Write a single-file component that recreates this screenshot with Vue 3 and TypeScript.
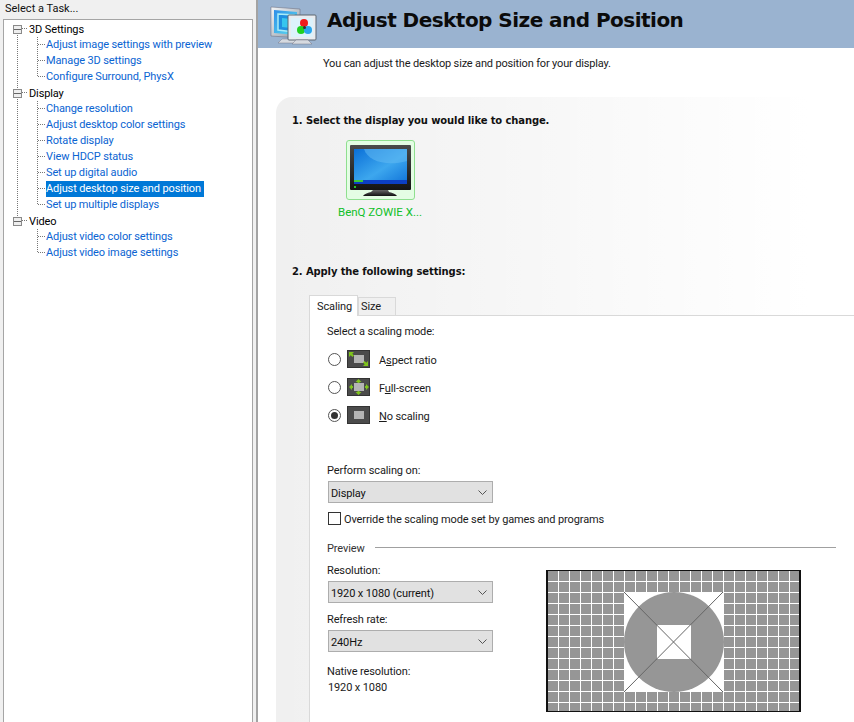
<script setup lang="ts">
type TreeGroup = { name: string; items: string[] };

const tree: TreeGroup[] = [
  {
    name: '3D Settings',
    items: ['Adjust image settings with preview', 'Manage 3D settings', 'Configure Surround, PhysX'],
  },
  {
    name: 'Display',
    items: [
      'Change resolution',
      'Adjust desktop color settings',
      'Rotate display',
      'View HDCP status',
      'Set up digital audio',
      'Adjust desktop size and position',
      'Set up multiple displays',
    ],
  },
  {
    name: 'Video',
    items: ['Adjust video color settings', 'Adjust video image settings'],
  },
];

const selected = 'Adjust desktop size and position';
</script>

<template>
  <div class="window">
    <aside class="sidebar">
      <div class="task-title">Select a Task...</div>
      <div class="tree">
        <svg class="tree-lines" width="60" height="240">
          <g stroke="#777" stroke-dasharray="1 1" fill="none">
            <path d="M17.5 12V196M22 7.5H28M22 71.5H28M22 199.5H28" />
            <path d="M37.5 16V55.5M37.5 80V183.5M37.5 208V231.5" />
            <path d="M38 23.5H46M38 39.5H46M38 55.5H46M38 87.5H46M38 103.5H46M38 119.5H46M38 135.5H46M38 151.5H46M38 167.5H46M38 183.5H46M38 215.5H46M38 231.5H46" />
          </g>
        </svg>
        <div v-for="group in tree" :key="group.name" class="group">
          <div class="group-row">
            <span class="expander"></span>
            <span>{{ group.name }}</span>
          </div>
          <div v-for="item in group.items" :key="item" class="item-row">
            <span class="item" :class="{ selected: item === selected }">{{ item }}</span>
          </div>
        </div>
      </div>
    </aside>

    <main class="content">
      <header class="banner">
        <svg class="banner-icon" width="48" height="46" viewBox="0 0 48 46">
          <defs>
            <linearGradient id="bz" x1="0" y1="0" x2="1" y2="1">
              <stop offset="0" stop-color="#f4f6f8" />
              <stop offset="1" stop-color="#8b96a3" />
            </linearGradient>
            <linearGradient id="sc" x1="0" y1="0" x2="1" y2="1">
              <stop offset="0" stop-color="#2f8fe8" />
              <stop offset="1" stop-color="#5fe0f0" />
            </linearGradient>
          </defs>
          <path d="M1 5L30 7V36L1 34z" fill="url(#bz)" stroke="#667" stroke-width="0.5" />
          <path d="M4 8L27 10V33L4 31z" fill="url(#sc)" />
          <path d="M8 12L24 13V30L8 28z" fill="#1f8fe0" stroke="#a8ecf8" stroke-width="1.5" />
          <path d="M12 16L21 17V26L12 25z" fill="#36c6ee" />
          <path d="M8 41h20l-2-4H12z" fill="#d6dae0" stroke="#667" stroke-width="0.4" />
          <rect x="18" y="13" width="28" height="25" rx="1" fill="#e8ecf0" stroke="#5d6670" stroke-width="1" />
          <rect x="21" y="16" width="22" height="19" fill="#dcf2fb" />
          <path d="M22 42h20l-4-4H26z" fill="#d6dae0" stroke="#667" stroke-width="0.4" />
          <circle cx="34" cy="21" r="4" fill="#f01c1c" />
          <circle cx="31" cy="28" r="4" fill="#20d020" />
          <circle cx="38" cy="28" r="4" fill="#2aa6ee" />
          <circle cx="34.5" cy="25.5" r="1.5" fill="#333" />
        </svg>
        <h1>Adjust Desktop Size and Position</h1>
      </header>

      <p class="intro">You can adjust the desktop size and position for your display.</p>

      <section class="panel">
        <h2 class="step-one">1. Select the display you would like to change.</h2>

        <div class="display-pick">
          <div class="display-card">
            <svg width="61" height="51" viewBox="0 0 61 51">
              <defs>
                <linearGradient id="scr" x1="0" y1="0" x2="1" y2="1">
                  <stop offset="0" stop-color="#0a6fd8" />
                  <stop offset="0.55" stop-color="#3da7ee" />
                  <stop offset="1" stop-color="#0f72d8" />
                </linearGradient>
                <linearGradient id="bez" x1="0" y1="0" x2="0" y2="1">
                  <stop offset="0" stop-color="#4a4a4a" />
                  <stop offset="1" stop-color="#141414" />
                </linearGradient>
                <linearGradient id="base" x1="0" y1="0" x2="0" y2="1">
                  <stop offset="0" stop-color="#666" />
                  <stop offset="1" stop-color="#111" />
                </linearGradient>
              </defs>
              <rect x="0" y="0" width="61" height="45" rx="1" fill="url(#bez)" />
              <rect x="4" y="4" width="53" height="35" fill="url(#scr)" />
              <path d="M14 4C18 16 36 22 57 16V4z" fill="#62baf2" opacity="0.55" />
              <rect x="4" y="35" width="53" height="4" fill="#0c3fc4" />
              <rect x="4" y="35" width="9" height="2" fill="#3cc83c" />
              <rect x="4" y="41" width="2" height="2" fill="#27c027" />
              <path d="M23 45h15l1 2c4 1 7 2 8 4H13c1-2 4-3 8-4z" fill="url(#base)" />
            </svg>
          </div>
          <div class="display-name">BenQ ZOWIE X...</div>
        </div>

        <h2 class="step-two">2. Apply the following settings:</h2>

        <div class="tabs">
          <div class="tab active">Scaling</div>
          <div class="tab">Size</div>
        </div>

        <div class="tab-body">
          <div class="label">Select a scaling mode:</div>

          <div class="modes">
            <label class="mode">
              <span class="radio"></span>
              <svg class="mode-icon" width="23" height="18" viewBox="0 0 23 18">
                <rect width="23" height="18" fill="#4b4b4b" />
                <rect x="0.5" y="0.5" width="22" height="17" fill="none" stroke="#333" />
                <rect x="7" y="5" width="10" height="8" fill="#b4b4b4" />
                <path d="M2 2h5l-1.7 1.7 1.7 1.7-1.6 1.6-1.7-1.7L2 7zM21 16h-5l1.7-1.7-1.7-1.7 1.6-1.6 1.7 1.7L21 11z" fill="#7fc41c" />
              </svg>
              <span class="mode-text">A<u>s</u>pect ratio</span>
            </label>
            <label class="mode">
              <span class="radio"></span>
              <svg class="mode-icon" width="23" height="18" viewBox="0 0 23 18">
                <rect width="23" height="18" fill="#4b4b4b" />
                <rect x="0.5" y="0.5" width="22" height="17" fill="none" stroke="#333" />
                <rect x="7" y="5" width="10" height="8" fill="#b4b4b4" />
                <path d="M11.5 1l3 3h-2v1h-2V4h-2zM11.5 17l3-3h-2v-1h-2v1h-2zM2 9l3-3v2h1v2H5v2zM22 9l-3-3v2h-1v2h1v2z" fill="#7fc41c" />
              </svg>
              <span class="mode-text">F<u>u</u>ll-screen</span>
            </label>
            <label class="mode">
              <span class="radio checked"></span>
              <svg class="mode-icon" width="23" height="18" viewBox="0 0 23 18">
                <rect width="23" height="18" fill="#4b4b4b" />
                <rect x="0.5" y="0.5" width="22" height="17" fill="none" stroke="#333" />
                <rect x="7" y="5" width="10" height="8" fill="#b4b4b4" />
              </svg>
              <span class="mode-text"><u>N</u>o scaling</span>
            </label>
          </div>

          <div class="label perform">Perform scaling on:</div>
          <div class="combo">
            <span>Display</span>
            <svg width="9" height="5" viewBox="0 0 9 5"><path d="M0.5 0.5L4.5 4.5L8.5 0.5" fill="none" stroke="#555" /></svg>
          </div>

          <label class="override">
            <span class="checkbox"></span>
            <span class="override-text">Override the scaling mode set by games and programs</span>
          </label>

          <div class="preview-title">
            <span class="preview-name">Preview</span>
            <span class="rule"></span>
          </div>

          <div class="preview-row">
            <div class="preview-fields">
              <div class="label">Resolution:</div>
              <div class="combo small-gap">
                <span>1920 x 1080 (current)</span>
                <svg width="9" height="5" viewBox="0 0 9 5"><path d="M0.5 0.5L4.5 4.5L8.5 0.5" fill="none" stroke="#555" /></svg>
              </div>
              <div class="label refresh">Refresh rate:</div>
              <div class="combo small-gap">
                <span>240Hz</span>
                <svg width="9" height="5" viewBox="0 0 9 5"><path d="M0.5 0.5L4.5 4.5L8.5 0.5" fill="none" stroke="#555" /></svg>
              </div>
              <div class="label native">Native resolution:</div>
              <div class="native-value">1920 x 1080</div>
            </div>

            <svg class="preview" width="256" height="143" viewBox="0 0 256 143">
              <defs>
                <pattern id="cells" x="2" y="1" width="11" height="11" patternUnits="userSpaceOnUse">
                  <rect width="11" height="11" fill="#fff" />
                  <rect width="10" height="10" fill="#969696" />
                </pattern>
              </defs>
              <rect x="1" y="0" width="253" height="142" fill="url(#cells)" />
              <path d="M1 0V142M254 0V142" stroke="#111" stroke-width="2" />
              <path d="M0 0.5H255M0 141.5H255" stroke="#111" />
              <rect x="78" y="22" width="99" height="100" fill="#fff" />
              <circle cx="128" cy="72" r="50" fill="#969696" />
              <rect x="111" y="55" width="34" height="34" fill="#fff" />
              <path d="M78 22L177 122M177 22L78 122" stroke="#666" stroke-width="1" />
            </svg>
          </div>
        </div>
      </section>
    </main>
  </div>
</template>

<style scoped>
.window {
  display: flex;
  width: 854px;
  height: 722px;
  overflow: hidden;
  font-family: Roboto, "Liberation Sans", sans-serif;
  font-size: 11px;
  letter-spacing: -0.12px;
  color: #1a1a1a;
  background: #fff;
}

.sidebar {
  width: 256px;
  flex: none;
  background: #f0f0f0;
  padding-left: 3px;
  box-sizing: border-box;
}

.task-title {
  height: 19px;
  line-height: 18px;
  padding-left: 2px;
  color: #111;
  letter-spacing: 0;
}

.tree {
  position: relative;
  width: 250px;
  height: 703px;
  box-sizing: border-box;
  border: 1px solid #a5a5a5;
  border-bottom: 0;
  background: #fff;
  padding-top: 1px;
}

.tree-lines {
  position: absolute;
  left: -4px;
  top: 1px;
}

.group-row,
.item-row {
  height: 16px;
  line-height: 16px;
  display: flex;
  align-items: center;
  white-space: nowrap;
}

.group-row {
  box-sizing: border-box;
  color: #000;
  padding: 2px 0 0 25px;
  position: relative;
}

.expander {
  position: absolute;
  left: 9px;
  top: 4px;
  width: 7px;
  height: 7px;
  border: 1px solid #8a8a8a;
  background: linear-gradient(#eee 0 3px, #666 3px 4px, #eee 4px);
}

.item-row {
  padding-left: 42px;
}

.item {
  color: #0a64d2;
  height: 16px;
  padding-right: 3px;
  position: relative;
}

.item.selected {
  background: #0078d7;
  color: #fff;
}

.content {
  flex: 1;
  min-width: 0;
  border-left: 2px solid #a3a3a3;
}

.banner {
  height: 48px;
  background: #9ab3d0;
  display: flex;
  align-items: center;
  padding-left: 12px;
}

.banner-icon {
  flex: none;
  margin-top: 1px;
}

h1 {
  margin: 0 0 9px 9px;
  font-family: "DejaVu Sans", sans-serif;
  font-size: 20px;
  letter-spacing: -0.53px;
  font-weight: 700;
  color: #0b0b0b;
  white-space: nowrap;
}

.intro {
  margin: 8px 0 0 65px;
  line-height: 16px;
  letter-spacing: -0.16px;
}

.panel {
  margin: 25px 0 0 18px;
  height: 625px;
  padding: 16px 0 0 16px;
  border-top-left-radius: 16px;
  background:
    linear-gradient(to right, rgba(240, 240, 240, 0), #fff 92%),
    linear-gradient(#f0f0f0, #f0f0f0);
  box-sizing: border-box;
}

h2 {
  margin: 0;
  font-family: "DejaVu Sans", sans-serif;
  font-size: 10px;
  letter-spacing: -0.12px;
  line-height: 16px;
  font-weight: 700;
  color: #111;
}

.display-pick {
  width: 100px;
  margin: 11px 0 0 38px;
  display: flex;
  flex-direction: column;
  align-items: center;
}

.display-card {
  width: 69px;
  height: 60px;
  box-sizing: border-box;
  border: 1px solid #8fdf8f;
  border-radius: 3px;
  background: #e4fde4;
  padding: 4px 3px;
}

.display-card svg {
  display: block;
}

.display-name {
  margin-top: 4px;
  line-height: 16px;
  font-size: 11.5px;
  letter-spacing: 0;
  color: #10c028;
  white-space: nowrap;
}

.step-two {
  margin-top: 44px;
}

.tabs {
  display: flex;
  align-items: flex-end;
  margin: 15px 0 0 17px;
  height: 20px;
  position: relative;
}

.tab {
  box-sizing: border-box;
  height: 18px;
  width: 38px;
  line-height: 17px;
  padding-left: 2px;
  border: 1px solid #d9d9d9;
  border-bottom: 0;
  background: #f0f0f0;
}

.tab.active {
  width: 49px;
  height: 21px;
  padding-left: 7px;
  line-height: 21px;
  background: #fff;
  position: relative;
  z-index: 1;
  margin-bottom: -1px;
}

.tab-body {
  margin-left: 17px;
  height: 420px;
  box-sizing: border-box;
  border-top: 1px solid #d9d9d9;
  border-left: 1px solid #d9d9d9;
  background: #fff;
  padding: 7px 0 0 17px;
}

.label {
  line-height: 18px;
  height: 16px;
}

.modes {
  margin-top: 11px;
  display: flex;
  flex-direction: column;
  gap: 10px;
}

.mode {
  display: flex;
  align-items: center;
  height: 18px;
}

.mode-text {
  padding-top: 2px;
}

.radio {
  width: 13px;
  height: 13px;
  box-sizing: border-box;
  border: 1px solid #555;
  border-radius: 50%;
  background: #fff;
  margin-left: 1px;
  position: relative;
}

.radio.checked::after {
  content: "";
  position: absolute;
  left: 2px;
  top: 2px;
  width: 7px;
  height: 7px;
  border-radius: 50%;
  background: #333;
}

.mode-icon {
  margin: 0 9px 0 6px;
}

.perform {
  margin-top: 38px;
}

.combo {
  box-sizing: border-box;
  margin-top: 3px;
  margin-left: 1px;
  width: 165px;
  height: 22px;
  border: 1px solid #adadad;
  background: #e1e1e1;
  display: flex;
  align-items: center;
  justify-content: space-between;
  padding: 2px 3px 0 2px;
  color: #111;
}

.combo svg {
  margin: 0 2px 2px 0;
}

.override {
  display: flex;
  align-items: center;
  margin: 8px 0 0 1px;
  height: 15px;
}

.override-text {
  padding-top: 2px;
}

.checkbox {
  width: 13px;
  height: 13px;
  box-sizing: border-box;
  border: 1px solid #333;
  background: #fff;
  margin-right: 3px;
}

.preview-title {
  display: flex;
  align-items: center;
  margin-top: 13px;
  width: 509px;
  height: 16px;
  color: #333;
}

.preview-name {
  width: 48px;
  padding-top: 2px;
}

.rule {
  flex: 1;
  height: 1px;
  background: #a0a0a0;
}

.preview-row {
  display: flex;
  align-items: flex-start;
  margin-top: 7px;
}

.preview-fields {
  width: 219px;
  flex: none;
}

.small-gap {
  margin-top: 3px;
}

.refresh {
  margin-top: 8px;
}

.native {
  margin-top: 11px;
}

.native-value {
  margin: 1px 0 -1px 1px;
  line-height: 16px;
}

.preview {
  flex: none;
  margin-top: 8px;
}
</style>

<style>
html, body {
  margin: 0;
  background: #fff;
}
</style>
